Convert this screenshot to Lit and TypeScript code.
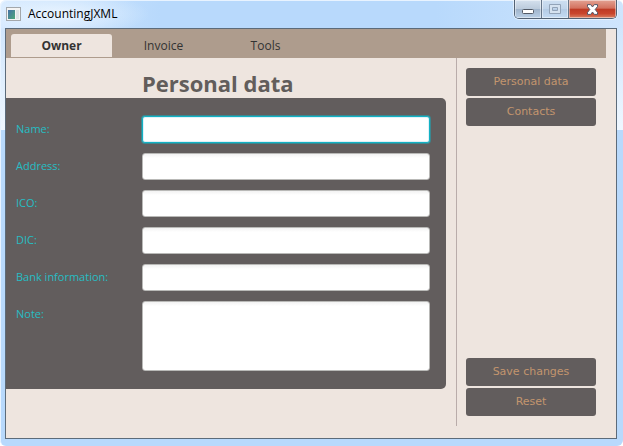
import { LitElement, html, css } from "lit";
import { customElement, state } from "lit/decorators.js";

interface Field {
  id: string;
  label: string;
}

const TABS = ["Owner", "Invoice", "Tools"];

const FIELDS: Field[] = [
  { id: "name", label: "Name:" },
  { id: "address", label: "Address:" },
  { id: "ico", label: "ICO:" },
  { id: "dic", label: "DIC:" },
  { id: "bank", label: "Bank information:" },
];

@customElement("window-titlebar")
export class WindowTitlebar extends LitElement {
  static styles = css`
    :host {
      display: flex;
      align-items: flex-start;
      height: 28px;
    }
    .icon {
      flex: none;
      margin: 7px 7px 0 1px;
    }
    h1 {
      flex: 1;
      margin: 5px 0 0;
      font: 12px/18px "Open Sans", "Noto Sans", sans-serif;
      color: #000;
    }
    .controls {
      display: flex;
      height: 19px;
      box-sizing: border-box;
      border: 1px solid #536274;
      border-top: 0;
      border-radius: 0 0 5px 5px;
      box-shadow: 0 0 0 1px rgba(255, 255, 255, 0.5);
      overflow: hidden;
    }
    button {
      display: flex;
      align-items: center;
      justify-content: center;
      width: 27px;
      padding: 0;
      border: 0;
      border-right: 1px solid #66768a;
      background: linear-gradient(#d5e1ee, #bccbdc 48%, #9fb3ca 50%, #b9cfe6);
      box-shadow: inset 0 0 0 1px rgba(255, 255, 255, 0.45);
    }
    button:disabled {
      background: linear-gradient(#cddff2, #c0d4ea 48%, #b3cae4 50%, #c4dbf4);
    }
    .close {
      width: 47px;
      border-right: 0;
      background: linear-gradient(#e3a293, #d3705d 46%, #bd3a24 50%, #c9452c 75%, #d98062);
    }
  `;

  render() {
    return html`
      <svg class="icon" width="15" height="14" viewBox="0 0 15 14" aria-hidden="true">
        <defs>
          <linearGradient id="pane" x1="0" y1="0" x2="1" y2="1">
            <stop offset="0" stop-color="#4470a8" />
            <stop offset="1" stop-color="#4fa878" />
          </linearGradient>
        </defs>
        <rect x=".5" y=".5" width="14" height="13" fill="#f4f4f4" stroke="#a3a7ab" />
        <rect x="2" y="3" width="7" height="9" fill="url(#pane)" />
        <rect x="10" y="3" width="3" height="9" fill="#dfe3e6" />
      </svg>
      <h1>AccountingJXML</h1>
      <div class="controls">
        <button aria-label="Minimize">
          <svg width="13" height="11" viewBox="0 0 13 11">
            <rect x=".5" y="5.5" width="11" height="4" rx="1" fill="#fff" stroke="#535a66" />
          </svg>
        </button>
        <button aria-label="Maximize" disabled>
          <svg width="12" height="10" viewBox="0 0 12 10">
            <path
              d="M.5.5h11v9H.5z M3.5 3.5h5v3h-5z"
              fill="#d5e2f0"
              fill-rule="evenodd"
              stroke="#92a3b8"
            />
          </svg>
        </button>
        <button class="close" aria-label="Close">
          <svg width="13" height="11" viewBox="0 0 13 11">
            <path
              d="M1.5.6h3.2l1.8 2.4L8.3.6h3.2v2L9.2 5.5l2.3 2.9v2H8.3L6.5 8l-1.8 2.4H1.5v-2l2.3-2.9-2.3-2.9z"
              fill="#fff"
              stroke="#535666"
            />
          </svg>
        </button>
      </div>
    `;
  }
}

@customElement("app-root")
export class AppRoot extends LitElement {
  @state() private tab = "Owner";

  static styles = css`
    :host {
      display: block;
      min-height: 100vh;
      box-sizing: border-box;
      background: #fff;
      font: 12px/16px "Open Sans", "Noto Sans", sans-serif;
    }
    .window {
      display: flex;
      flex-direction: column;
      min-height: 100vh;
      box-sizing: border-box;
      padding: 0 6px 7px 5px;
      border-radius: 6px;
      background:
        radial-gradient(ellipse 90px 22px at 60px 14px, rgba(240, 248, 255, 0.8), transparent) no-repeat,
        linear-gradient(90deg, #d5e9ff, #b8d9fc 160px, #b8d9fc 70%, #cfe5fd) 0 0 / 100% 28px no-repeat,
        linear-gradient(#c8e1fc, #eff7ff 130px, #b8d9fc 130px);
      box-shadow: inset 1px 1px 0 #e8f3ff;
    }
    .client {
      flex: 1;
      display: flex;
      flex-direction: column;
      border: 1px solid #5c6b7a;
      background: #eee5df;
    }
    nav {
      display: flex;
      box-sizing: border-box;
      height: 29px;
      margin-right: 10px;
      padding: 5px 5px 1px;
      background: #ae9c8d;
    }
    .tab {
      width: 101px;
      margin-right: 1px;
      padding: 0;
      border: 0;
      border-radius: 3px 3px 0 0;
      background: none;
      color: #333;
      font: inherit;
    }
    .tab[aria-selected="true"] {
      background: #eee5df;
      font-weight: 700;
    }
    main {
      flex: 1;
      display: flex;
      margin: 0 20px 12px 0;
    }
    .form {
      flex: 1;
      margin-right: 10px;
    }
    h2 {
      margin: 0 0 0 136px;
      padding-top: 10px;
      font-size: 22px;
      line-height: 30px;
      color: #625d5b;
    }
    .panel {
      display: grid;
      grid-template-columns: 126px 1fr;
      row-gap: 10px;
      padding: 18px 16px 18px 10px;
      border-radius: 0 5px 5px 0;
      background: #625d5d;
    }
    label {
      padding-top: 5px;
      font-size: 11px;
      color: #26bec4;
    }
    input,
    textarea {
      display: block;
      width: 100%;
      height: 27px;
      box-sizing: border-box;
      margin: 0;
      padding: 4px 6px;
      border: 1px solid #b9b9b7;
      border-radius: 3px;
      outline: 0;
      resize: none;
      background: linear-gradient(#f2f2f2, #fff 4px);
      font: inherit;
    }
    textarea {
      height: 70px;
    }
    .current {
      border-color: #12b2c4;
      background: #fff;
      box-shadow: 0 0 0 1px rgba(18, 178, 196, 0.5), inset 0 0 0 1px #dff1f8;
    }
    aside {
      display: flex;
      flex-direction: column;
      gap: 2px;
      width: 130px;
      padding: 10px 0 10px 9px;
      border-left: 1px solid #b9acaa;
    }
    .action {
      height: 28px;
      padding: 0;
      border: 0;
      border-radius: 3px;
      background: #625d5d;
      color: #c3956e;
      font: 11px/16px "DejaVu Sans", sans-serif;
    }
    .spacer {
      flex: 1;
    }
  `;

  render() {
    return html`
      <div class="window">
        <window-titlebar></window-titlebar>
        <div class="client">
          <nav role="tablist">
            ${TABS.map(
              (name) => html`<button
                class="tab"
                role="tab"
                aria-selected=${name === this.tab ? "true" : "false"}
                @click=${() => (this.tab = name)}
              >
                ${name}
              </button>`
            )}
          </nav>
          <main>
            <form class="form">
              <h2>Personal data</h2>
              <div class="panel">
                ${FIELDS.map(
                  (f, i) => html`<label for=${f.id}>${f.label}</label>
                    <input id=${f.id} class=${i === 0 ? "current" : ""} type="text" />`
                )}
                <label for="note">Note:</label>
                <textarea id="note"></textarea>
              </div>
            </form>
            <aside>
              <button class="action">Personal data</button>
              <button class="action">Contacts</button>
              <div class="spacer"></div>
              <button class="action">Save changes</button>
              <button class="action">Reset</button>
            </aside>
          </main>
        </div>
      </div>
    `;
  }
}
